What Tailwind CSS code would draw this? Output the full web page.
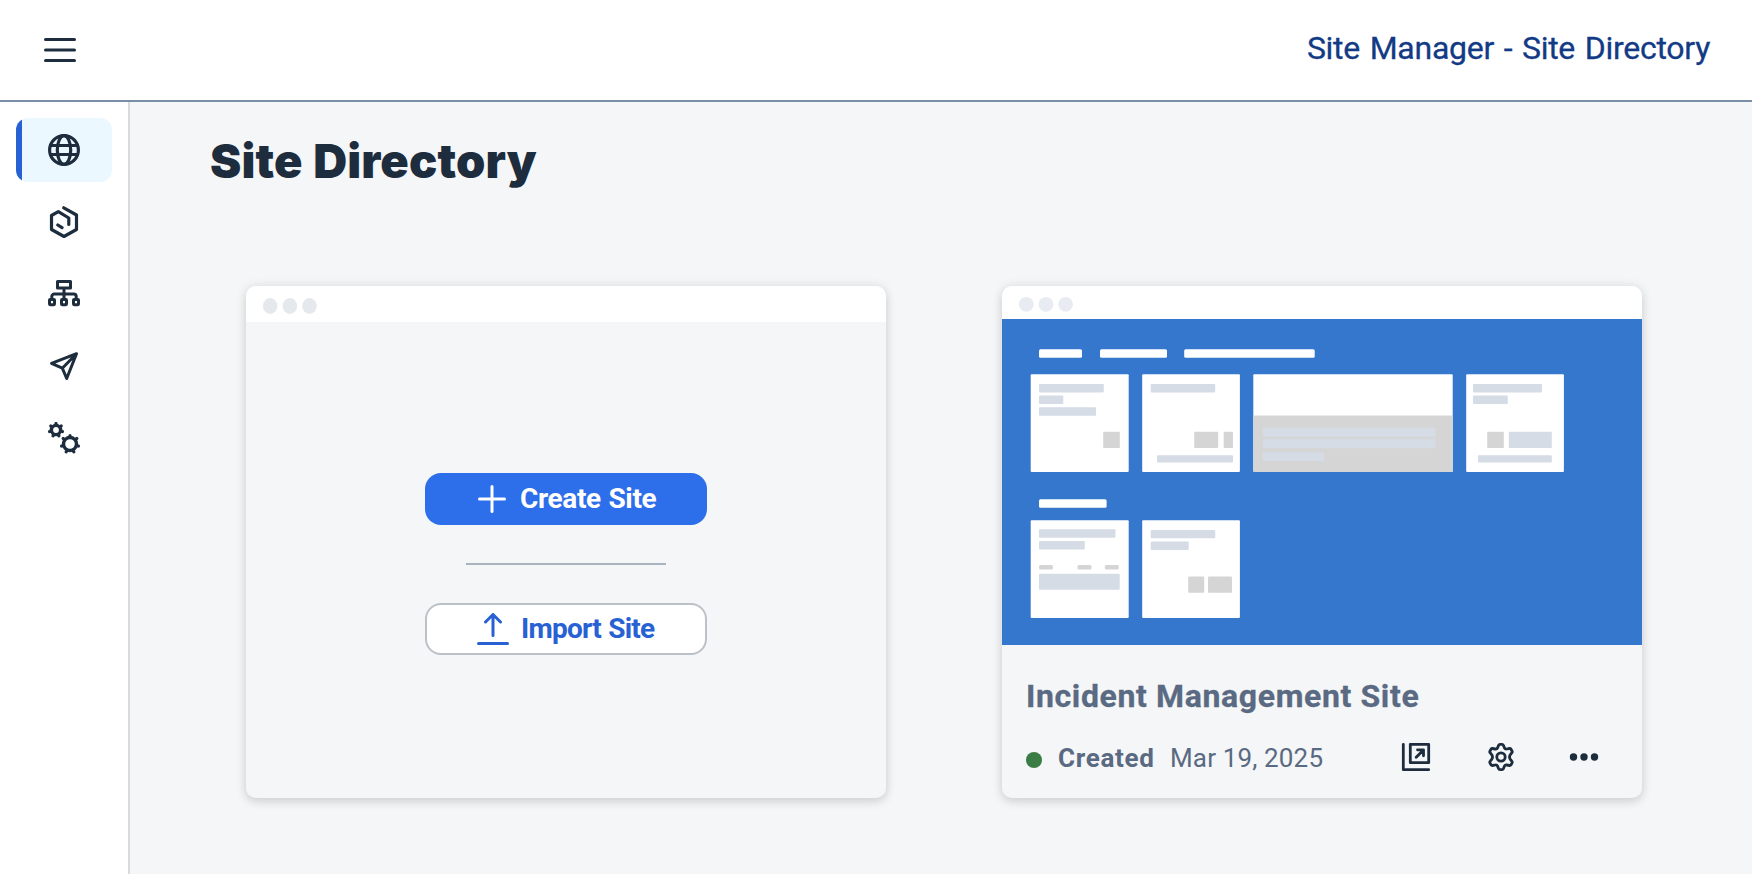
<!DOCTYPE html>
<html lang="en">
<head>
<meta charset="utf-8">
<title>Site Manager - Site Directory</title>
<script src="https://cdn.jsdelivr.net/npm/@tailwindcss/browser@4"></script>
</head>
<body class="flex h-[874px] w-[1752px] flex-col overflow-hidden bg-[#f5f6f7] font-['Roboto',sans-serif] text-[#1d2d3e]">
  <header class="flex h-[102px] shrink-0 items-center justify-between border-b-2 border-[#788fa6] bg-white pr-[42px] pl-11">
    <button aria-label="Menu" class="size-8">
      <svg class="size-8" viewBox="0 0 32 32" fill="none" stroke="currentColor" stroke-width="3" stroke-linecap="round"><path d="M1.5 5.5h29M1.5 16h29M1.5 26.5h29"/></svg>
    </button>
    <div class="pb-1 text-[32px] leading-10 tracking-[-0.27px] whitespace-nowrap text-[#123a85] [-webkit-text-stroke:0.3px_#123a85] [word-spacing:2px]">Site Manager - Site Directory</div>
  </header>
  <div class="flex min-h-0 flex-1">
    <nav class="flex w-[130px] shrink-0 flex-col gap-2 border-r-2 border-[#d9dadc] bg-white px-4 pt-4">
      <a class="flex h-16 items-center justify-center overflow-hidden rounded-xl bg-[#ebf8ff]">
        <span class="h-full w-1.5 shrink-0 bg-[#2761d4]"></span>
        <span class="flex flex-1 justify-center pr-1.5"><svg class="size-8" viewBox="0 0 32 32" fill="none" stroke="currentColor" stroke-width="3.200"><circle cx="16" cy="16" r="14.400"/><ellipse cx="16" cy="16" rx="6.700" ry="14.400"/><path d="M2.500 11.500h27M2.500 20.500h27"/></svg></span>
      </a>
      <a class="flex h-16 items-center justify-center"><svg class="size-8" viewBox="0 0 32 32" fill="none" stroke="currentColor" stroke-width="3.200" stroke-linecap="round" stroke-linejoin="round"><path d="M15.800 1.800L28.500 9V23.500L16 30.500 3.500 23.500V9.500L10.300 5.600 20.800 12V18.500M9.800 19L14 21.600"/></svg></a>
      <a class="flex h-16 items-center justify-center"><svg class="size-8" viewBox="0 0 32 32" fill="none" stroke="currentColor" stroke-width="3" stroke-linejoin="round"><path d="M9.500 3.500h13v6.500h-13zM16 10v12M3.800 22v-3.500a2.500 2.500 0 0 1 2.500-2.500h19.400a2.500 2.500 0 0 1 2.500 2.500V22"/><rect x="1.500" y="21.500" width="5" height="5.200" rx=".6"/><rect x="13.500" y="21.500" width="5" height="5.200" rx=".6"/><rect x="25.500" y="21.500" width="5" height="5.200" rx=".6"/></svg></a>
      <a class="flex h-16 items-center justify-center"><svg class="size-8" viewBox="0 0 32 32" fill="none" stroke="currentColor" stroke-width="3" stroke-linejoin="round"><path d="M28.500 3.700L3.500 13.300 14.300 18.200 18.700 28.500zM28.500 3.700L14.300 18.200"/></svg></a>
      <a class="flex h-16 items-center justify-center"><svg class="size-8" viewBox="0 0 32 32" fill="none" stroke="currentColor"><g stroke-width="3.400"><circle cx="8" cy="8" r="4.600"/><circle cx="22" cy="22" r="6.500"/></g><g stroke-width="3.200" stroke-linecap="round"><path d="M8 3V1.500M11.900 4.900L13.200 3.900M12.900 9.100L14.400 9.500M10.200 12.500L10.900 13.900M5.800 12.500L5.100 13.900M3.100 9.100L1.600 9.500M4.100 4.900L2.800 3.900"/><path d="M22 15V13.500M27.500 17.600L28.800 16.500M28.800 23.600L30.400 24M25 28.300L25.800 29.900M19 28.300L18.200 29.900M15.200 23.600L13.600 24M16.500 17.600L15.200 16.500"/></g></svg></a>
    </nav>
    <main class="flex-1 pt-[27px] pl-20">
      <h1 class="font-['Inter',sans-serif] text-[47px] leading-[64px] font-black tracking-[0.15px] whitespace-nowrap [word-spacing:1px]">Site Directory</h1>
      <div class="mt-[93px] flex gap-[116px] pl-9">
        <section class="flex h-[512px] w-[640px] flex-col overflow-hidden rounded-[10px] bg-[#f5f6f7] shadow-[0_4px_10px_rgba(34,35,38,0.13),0_0_12px_rgba(34,35,38,0.09)]">
          <svg class="h-9 w-full shrink-0 bg-white" viewBox="0 0 640 36" fill="#e5e9ee"><ellipse cx="24.200" cy="20" rx="7.300" ry="7.900"/><ellipse cx="43.900" cy="20" rx="7.300" ry="7.900"/><ellipse cx="63.500" cy="20" rx="7.300" ry="7.900"/></svg>
          <div class="flex flex-1 flex-col items-center pt-[151px]">
            <button class="flex h-[52px] w-[282px] items-center rounded-2xl bg-[#2d6eea] pl-[52px] text-[28px] font-bold whitespace-nowrap text-white">
              <svg class="size-8" viewBox="0 0 32 32" fill="none" stroke="currentColor" stroke-width="3" stroke-linecap="round"><path d="M15 3.500v25M2.500 16h25"/></svg>
              <span class="pl-[11px] tracking-[-0.36px] [word-spacing:1px]">Create Site</span>
            </button>
            <div class="mt-[38px] h-0.5 w-[200px] bg-[#a9b4be]"></div>
            <button class="mt-[38px] flex h-[52px] w-[282px] items-center rounded-2xl border-2 border-[#bcc1c8] bg-white pl-[50px] text-[28px] font-bold whitespace-nowrap text-[#2761d4]">
              <svg class="size-8" viewBox="0 0 32 32" fill="none" stroke="currentColor" stroke-width="3" stroke-linecap="round" stroke-linejoin="round"><path d="M1.500 30.500h29M16 22.500V1.500M8.500 9L16 1.500 23.500 9"/></svg>
              <span class="pl-3 tracking-[-0.74px] [word-spacing:1px]">Import Site</span>
            </button>
          </div>
        </section>
        <section class="flex h-[512px] w-[640px] flex-col overflow-hidden rounded-[10px] bg-[#f5f6f7] shadow-[0_4px_10px_rgba(34,35,38,0.13),0_0_12px_rgba(34,35,38,0.09)]">
          <!-- Site preview illustration -->
          <svg class="h-[359px] w-full shrink-0" viewBox="1002 286 640 359">
            <path fill="#fff" d="M1002 286h640v34h-640z"/>
            <path fill="#3577cd" d="M1002 319h640v326h-640z"/>
            <g fill="#e8ebf1"><circle cx="1026.300" cy="304.300" r="7.400"/><circle cx="1046" cy="304.300" r="7.400"/><circle cx="1065.600" cy="304.300" r="7.400"/></g>
            <g fill="#fff">
              <rect x="1039" y="349.200" width="43" height="8.600" rx="1.500"/><rect x="1100" y="349.200" width="67" height="8.600" rx="1.500"/><rect x="1184.200" y="349.200" width="130.500" height="8.600" rx="1.500"/><rect x="1039" y="499.200" width="67.600" height="8.600" rx="1.500"/>
              <rect x="1030.700" y="374.200" width="98" height="97.800" rx="1"/><rect x="1142.200" y="374.200" width="97.700" height="97.800" rx="1"/><rect x="1253.300" y="374.200" width="199.400" height="97.800" rx="1"/><rect x="1466.200" y="374.200" width="97.700" height="97.800" rx="1"/>
              <rect x="1030.700" y="520.300" width="98" height="97.700" rx="1"/><rect x="1142.200" y="520.300" width="97.700" height="97.700" rx="1"/>
            </g>
            <g fill="#d5d5d5">
              <rect x="1103.200" y="431.800" width="16.600" height="16.300" rx="1"/><rect x="1194.200" y="431.800" width="24" height="16.300" rx="1"/><rect x="1223.700" y="431.800" width="9.300" height="16.300" rx="1"/><path d="M1253.700 415.500h199v56.500h-199z"/><rect x="1487.200" y="431.800" width="16.600" height="16.300" rx="1"/>
              <rect x="1039" y="565" width="14" height="4.500" rx="1.500"/><rect x="1077.500" y="565" width="14" height="4.500" rx="1.500"/><rect x="1104.800" y="565" width="14" height="4.500" rx="1.500"/><rect x="1188.200" y="576.500" width="16" height="16.300" rx="1"/><rect x="1208" y="576.500" width="24" height="16.300" rx="1"/>
            </g>
            <g fill="#d5dce6">
              <rect x="1039" y="383.900" width="64.800" height="8.500" rx="1"/><rect x="1039" y="395.600" width="24.300" height="8.400" rx="1"/><rect x="1039" y="407.200" width="57" height="8.500" rx="1"/>
              <rect x="1150.700" y="383.900" width="64.500" height="8.500" rx="1"/><rect x="1157" y="455.200" width="76" height="7.300" rx="1"/>
              <rect x="1263" y="427.800" width="172.500" height="9" rx="1"/><rect x="1263" y="439.300" width="172.500" height="8.900" rx="1"/><rect x="1263" y="452.300" width="61" height="8.700" rx="1"/>
              <rect x="1473" y="383.900" width="69" height="8.500" rx="1"/><rect x="1473" y="395.600" width="34.800" height="8.400" rx="1"/><rect x="1508.800" y="431.800" width="43" height="16.300" rx="1"/><rect x="1478" y="455.200" width="73.800" height="7.300" rx="1"/>
              <rect x="1039" y="529.200" width="76.500" height="8.500" rx="1"/><rect x="1039" y="541" width="45.800" height="8.500" rx="1"/><rect x="1039" y="573.800" width="80.700" height="16" rx="1"/>
              <rect x="1150.700" y="530" width="64.500" height="8.300" rx="1"/><rect x="1150.700" y="541.600" width="38" height="8.400" rx="1"/>
            </g>
          </svg>
          <div class="flex flex-1 flex-col px-6 pt-[31px] text-[#596a82]">
            <h2 class="text-[32px] leading-10 font-bold tracking-[0.63px] whitespace-nowrap [-webkit-text-stroke:0.3px_#596a82]">Incident Management Site</h2>
            <div class="mt-5 flex h-[44px] items-center text-[26px]">
              <span class="mt-1 size-4 shrink-0 rounded-full bg-[#3a7d44]"></span>
              <span class="ml-4 w-[97px] font-bold tracking-[0.7px] whitespace-nowrap">Created</span>
              <span class="ml-[15px] w-[203px] tracking-[0.15px] whitespace-nowrap">Mar 19, 2025</span>
              <span class="flex pb-[2px] text-[#1d2d3e]">
                <svg class="ml-[27px] size-8" viewBox="0 0 32 32" fill="none" stroke="currentColor" stroke-width="2.800" stroke-linecap="round" stroke-linejoin="round"><path d="M3.300 3.300V28.700H28.700M10.300 3.300H28.700V21.700H10.300zM16.200 16.200L23 9.500M17.500 8.800H23.500V14.800"/></svg>
                <svg class="ml-[53px] size-8" viewBox="0 0 32 32" fill="none" stroke="currentColor" stroke-width="2.800" stroke-linejoin="round"><circle cx="16" cy="16" r="4.200"/><path d="M13.600 4.200Q14 3.300 15 3.300H17Q18 3.300 18.400 4.200L19.500 7Q20.200 8.300 21.700 8L24.500 7.500Q25.500 7.400 26 8.200L27 10Q27.500 11 26.900 11.700L25 14.200Q24 16 25 17.800L26.900 20.300Q27.500 21 27 22L26 23.800Q25.500 24.600 24.500 24.500L21.700 24Q20.200 23.700 19.500 25L18.400 27.800Q18 28.700 17 28.700H15Q14 28.700 13.600 27.800L12.500 25Q11.800 23.700 10.300 24L7.500 24.500Q6.500 24.600 6 23.800L5 22Q4.500 21 5.100 20.300L7 17.800Q8 16 7 14.200L5.100 11.700Q4.500 11 5 10L6 8.200Q6.500 7.400 7.500 7.500L10.300 8Q11.800 8.300 12.500 7z"/></svg>
                <svg class="ml-[51px] size-8" viewBox="0 0 32 32" fill="currentColor"><circle cx="5.500" cy="16" r="3.700"/><circle cx="16" cy="16" r="3.700"/><circle cx="26.500" cy="16" r="3.700"/></svg>
              </span>
            </div>
          </div>
        </section>
      </div>
    </main>
  </div>
</body>
</html>
